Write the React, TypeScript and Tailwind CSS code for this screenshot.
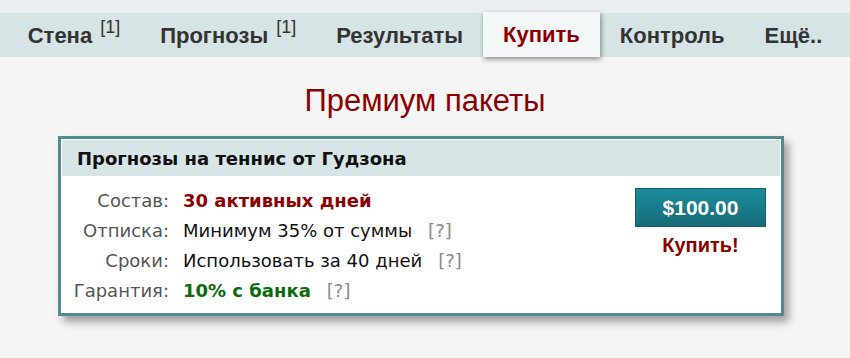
import React from "react";

const navItems: { label: string; sup?: string; active?: boolean }[] = [
  { label: "Стена", sup: "[1]" },
  { label: "Прогнозы", sup: "[1]" },
  { label: "Результаты" },
  { label: "Купить", active: true },
  { label: "Контроль" },
  { label: "Ещё.." },
];

const rows = [
  { label: "Состав:", value: "30 активных дней", cls: "font-bold text-[#8b0000]", help: false },
  { label: "Отписка:", value: "Минимум 35% от суммы", cls: "text-[#111]", help: true },
  { label: "Сроки:", value: "Использовать за 40 дней", cls: "text-[#111]", help: true },
  { label: "Гарантия:", value: "10% с банка", cls: "font-bold text-[#0b6b0b]", help: true },
];

export default function App() {
  return (
    <div className="w-[850px] h-[358px] bg-[#f5f5f5] overflow-hidden">
      <div className="h-[13px] bg-[#eaf0f2]" />
      <div className="h-[44px] bg-[#d7e4e6] flex justify-center items-stretch font-['Liberation_Sans',Arial,sans-serif]">
        {navItems.map((it) => (
          <div
            key={it.label}
            className={
              it.active
                ? "px-5 flex items-center text-[22px] font-bold text-[#8b0000] bg-[#f4f7f8] shadow-[1px_2px_5px_rgba(0,0,0,0.45)] -mt-px relative"
                : "px-5 flex items-center text-[22px] font-bold text-[#333]"
            }
          >
            <span>{it.label}</span>
            {it.sup && (
              <span className="ml-2 text-[18px] font-normal relative -top-[8px]">{it.sup}</span>
            )}
          </div>
        ))}
      </div>
      <div className="text-center mt-[26px] text-[31px] leading-[36px] text-[#8b0000] font-['Liberation_Sans',Arial,sans-serif]">
        Премиум пакеты
      </div>
      <div className="mx-[58px] mt-[17px] w-[726px] border-[3px] border-[#4f8b90] bg-white p-px shadow-[5px_6px_8px_rgba(0,0,0,0.35)] font-['DejaVu_Sans',Verdana,sans-serif]">
        <div className="h-[36px] bg-[#d8e5e7] flex items-center pl-[15px] text-[18px] font-bold text-[#111]">
          Прогнозы на теннис от Гудзона
        </div>
        <div className="flex pt-[9px] pb-[7px]">
          <div className="flex-1">
            {rows.map((r) => (
              <div key={r.label} className="flex items-center h-[30px] text-[18px]">
                <div className="w-[107px] text-right text-[#555]">{r.label}</div>
                <div className={"ml-[14px] " + r.cls}>{r.value}</div>
                {r.help && <div className="ml-[16px] text-[#8a8a8a] font-normal">[?]</div>}
              </div>
            ))}
          </div>
          <div className="w-[131px] mr-[14px] mt-[3px] flex flex-col items-center font-['Liberation_Sans',Arial,sans-serif]">
            <div className="w-[131px] h-[39px] bg-gradient-to-b from-[#1a8c9c] to-[#166b79] border border-[#13606c] flex items-center justify-center text-white font-bold text-[21px]">
              $100.00
            </div>
            <div className="mt-[3px] text-[#8b0000] font-bold text-[20px]">Купить!</div>
          </div>
        </div>
      </div>
    </div>
  );
}
